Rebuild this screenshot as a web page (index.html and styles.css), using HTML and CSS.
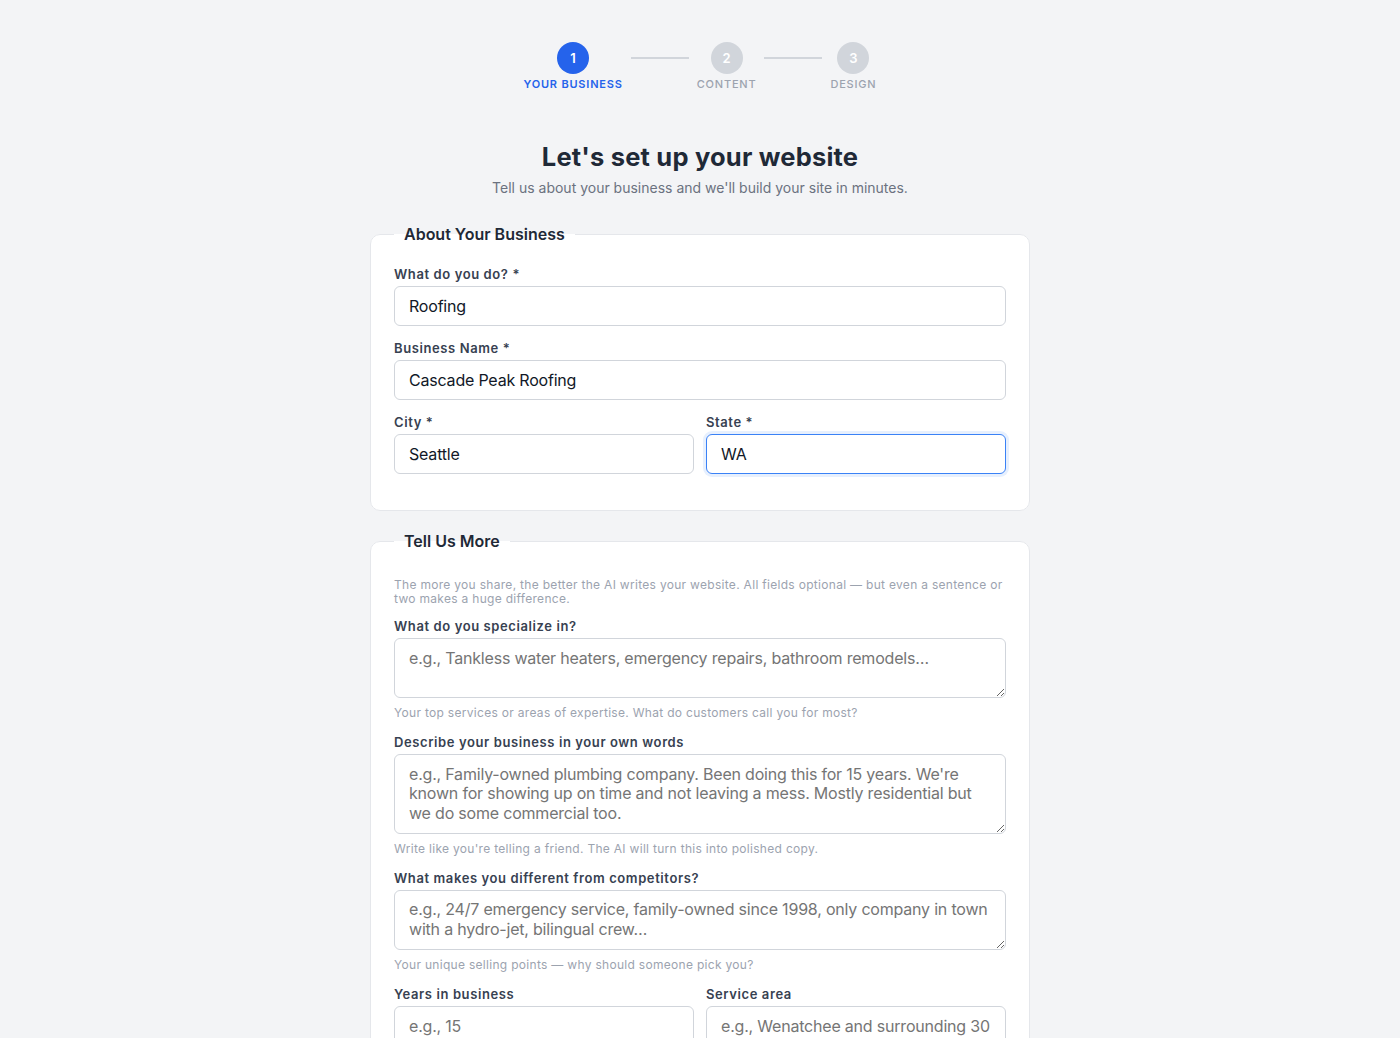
FILE: index.html
```html
<!DOCTYPE html>
<html lang="en">
<head>
<meta charset="utf-8">
<title>Let's set up your website</title>
<link rel="stylesheet" href="styles.css">
</head>
<body>
<main class="page">
  <ol class="stepper">
    <li class="step step--active">
      <span class="step-dot">1</span>
      <span class="step-label">Your Business</span>
    </li>
    <li class="step-line" aria-hidden="true"></li>
    <li class="step">
      <span class="step-dot">2</span>
      <span class="step-label">Content</span>
    </li>
    <li class="step-line" aria-hidden="true"></li>
    <li class="step">
      <span class="step-dot">3</span>
      <span class="step-label">Design</span>
    </li>
  </ol>

  <header class="intro-head">
    <h1 class="title">Let's set up your website</h1>
    <p class="subtitle">Tell us about your business and we'll build your site in minutes.</p>
  </header>

  <form class="form">
    <fieldset class="card">
      <legend class="card-legend">About Your Business</legend>
      <div class="field">
        <label class="label" for="what">What do you do? *</label>
        <input class="input" id="what" type="text" value="Roofing">
      </div>
      <div class="field">
        <label class="label" for="name">Business Name *</label>
        <input class="input" id="name" type="text" value="Cascade Peak Roofing">
      </div>
      <div class="row">
        <div class="field">
          <label class="label" for="city">City *</label>
          <input class="input" id="city" type="text" value="Seattle">
        </div>
        <div class="field">
          <label class="label" for="state">State *</label>
          <input class="input is-focused" id="state" type="text" value="WA">
        </div>
      </div>
    </fieldset>

    <fieldset class="card">
      <legend class="card-legend">Tell Us More</legend>
      <p class="card-intro">The more you share, the better the AI writes your website. All fields optional — but even a sentence or two makes a huge difference.</p>
      <div class="field">
        <label class="label" for="spec">What do you specialize in?</label>
        <textarea class="input textarea" id="spec" rows="2" placeholder="e.g., Tankless water heaters, emergency repairs, bathroom remodels…"></textarea>
        <p class="hint">Your top services or areas of expertise. What do customers call you for most?</p>
      </div>
      <div class="field">
        <label class="label" for="desc">Describe your business in your own words</label>
        <textarea class="input textarea" id="desc" rows="3" placeholder="e.g., Family-owned plumbing company. Been doing this for 15 years. We're known for showing up on time and not leaving a mess. Mostly residential but we do some commercial too."></textarea>
        <p class="hint">Write like you're telling a friend. The AI will turn this into polished copy.</p>
      </div>
      <div class="field">
        <label class="label" for="diff">What makes you different from competitors?</label>
        <textarea class="input textarea" id="diff" rows="2" placeholder="e.g., 24/7 emergency service, family-owned since 1998, only company in town with a hydro-jet, bilingual crew…"></textarea>
        <p class="hint">Your unique selling points — why should someone pick you?</p>
      </div>
      <div class="row">
        <div class="field">
          <label class="label" for="years">Years in business</label>
          <input class="input" id="years" type="text" placeholder="e.g., 15">
        </div>
        <div class="field">
          <label class="label" for="area">Service area</label>
          <input class="input" id="area" type="text" placeholder="e.g., Wenatchee and surrounding 30 miles">
        </div>
      </div>
    </fieldset>
  </form>
</main>
</body>
</html>
```

FILE: styles.css
```css
* {
  box-sizing: border-box;
}

html, body {
  margin: 0;
  padding: 0;
  background: #f3f4f6;
}

body {
  font-family: Inter, "Noto Sans", "Liberation Sans", sans-serif;
  color: #1f2937;
}

.page {
  width: 660px;
  margin: 0 auto;
  padding: 42px 0 60px;
}

/* Stepper */
.stepper {
  list-style: none;
  margin: 0 0 50px;
  padding: 0;
  display: flex;
  justify-content: center;
  align-items: flex-start;
  gap: 8px;
}

.step {
  display: flex;
  flex-direction: column;
  align-items: center;
}

.step-dot {
  width: 32px;
  height: 32px;
  border-radius: 50%;
  background: #d1d5db;
  color: #ffffff;
  font-size: 13px;
  font-weight: 600;
  display: flex;
  align-items: center;
  justify-content: center;
}

.step-label {
  margin-top: 3px;
  font-size: 11px;
  font-weight: 500;
  letter-spacing: 0.8px;
  text-transform: uppercase;
  color: #9ca3af;
}

.step--active .step-dot {
  background: #2563eb;
}

.step--active .step-label {
  color: #2563eb;
  font-weight: 600;
}

.step-line {
  width: 58px;
  height: 2px;
  margin-top: 15px;
  background: #d1d5db;
}

/* Heading */
.intro-head {
  text-align: center;
  margin-bottom: 28px;
}

.title {
  margin: 0;
  font-size: 25.5px;
  font-weight: 700;
  color: #1f2937;
  letter-spacing: 0.2px;
}

.subtitle {
  margin: 7px 0 0;
  font-size: 14px;
  color: #6b7280;
}

/* Cards */
.form {
  display: flex;
  flex-direction: column;
  gap: 20px;
}

.card {
  margin: 0;
  padding: 22px 23px 22px;
  background: #ffffff;
  border: 1px solid #e5e7eb;
  border-radius: 10px;
  min-width: 0;
}

.card-legend {
  padding: 0 10px;
  font-size: 16px;
  font-weight: 600;
  color: #1f2937;
}

.card-intro {
  margin: 5px 0 12px;
  font-size: 12px;
  line-height: 14px;
  color: #9ca3af;
  letter-spacing: 0.3px;
}

.field {
  display: flex;
  flex-direction: column;
  margin-bottom: 14px;
  min-width: 0;
}

.row {
  display: grid;
  grid-template-columns: 1fr 1fr;
  gap: 12px;
}

.label {
  font-size: 13px;
  font-weight: 600;
  color: #374151;
  letter-spacing: 0.6px;
  margin-bottom: 4px;
}

.input {
  width: 100%;
  height: 40px;
  padding: 0 14px;
  font-family: inherit;
  font-size: 16px;
  color: #111827;
  letter-spacing: -0.2px;
  background: #ffffff;
  border: 1px solid #d1d5db;
  border-radius: 6px;
  outline: none;
}

.input.is-focused {
  border-color: #3b82f6;
  box-shadow: 0 0 0 3px rgba(59, 130, 246, 0.12);
}

.textarea {
  height: auto;
  padding: 9.5px 13px 9.5px 14px;
  line-height: 19.5px;
  resize: vertical;
  display: block;
}

.hint {
  margin: 7px 0 0;
  font-size: 12px;
  color: #9ca3af;
  letter-spacing: 0.3px;
}
```
